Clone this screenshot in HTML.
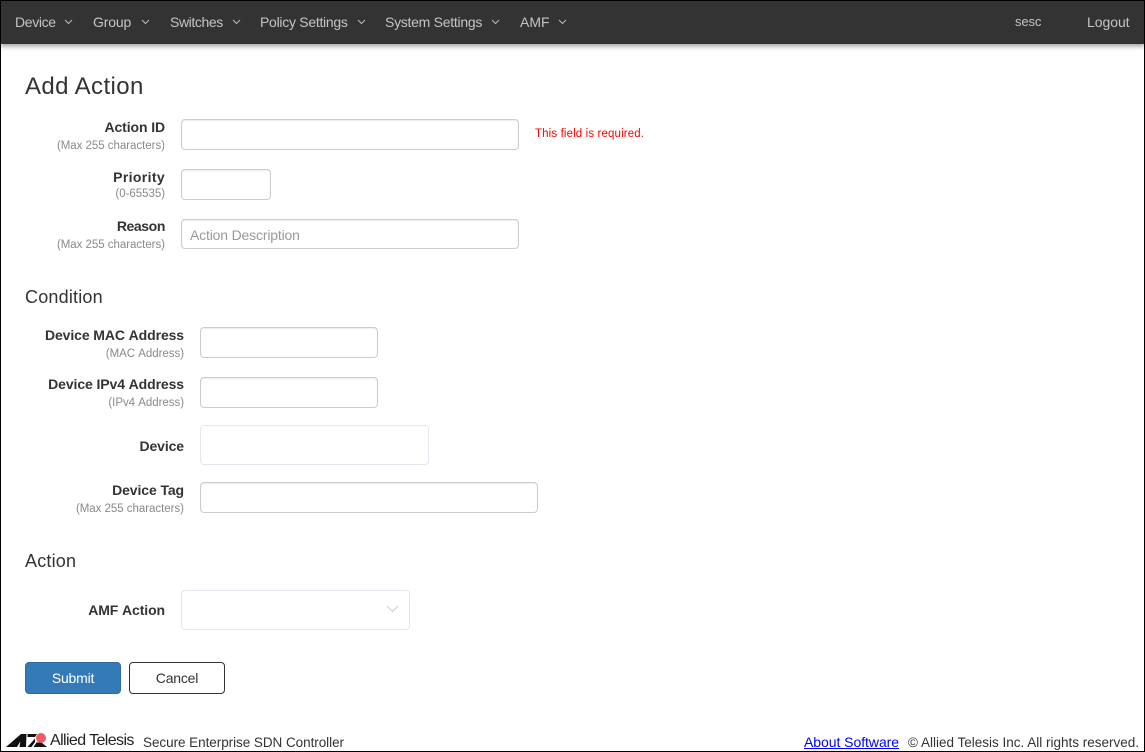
<!DOCTYPE html>
<html><head><meta charset="utf-8"><title>Add Action</title>
<style>
html,body{margin:0;padding:0;background:#fff}
#p{position:relative;width:1145px;height:752px;overflow:hidden;background:#fff;font-family:"Liberation Sans",sans-serif;color:#333}
#f{position:absolute;left:0;top:0;width:1145px;height:752px;box-sizing:border-box;border:1px solid #000;z-index:9;pointer-events:none}
#n{position:absolute;left:0;top:0;width:1145px;height:44px;background:#333;box-shadow:0 2px 5px rgba(0,0,0,.4)}
.t{position:absolute;white-space:nowrap;line-height:18px}
.nv{font-size:14px;color:#c4c4c4;top:13px}
.car{position:absolute;top:19px;width:9px;height:6px}
.l{font-size:14px;font-weight:bold;color:#333;text-align:right;right:0;letter-spacing:-.1px}
.s{font-size:11.5px;color:#8a8a8a;letter-spacing:-.03px}
.i{position:absolute;box-sizing:border-box;background:#fff;border:1px solid #ccc;border-radius:4px;box-shadow:inset 0 1px 1px rgba(0,0,0,.075)}
.c{position:absolute;box-sizing:border-box;background:#fff;border:1px solid #e4e6ef;border-radius:4px}
.r{position:absolute;text-align:right}
.h{font-size:18px;color:#333;letter-spacing:.2px}
.b{position:absolute;box-sizing:border-box;top:662px;width:96px;height:32px;border-radius:4px;text-align:center;font-size:14px;line-height:30px;letter-spacing:-.2px}
</style></head><body><div id="p">
<div id="n">
<span class="t nv" style="left:15px;letter-spacing:-.35px">Device</span>
<span class="t nv" style="left:93px;letter-spacing:-.15px">Group</span>
<span class="t nv" style="left:170px;letter-spacing:-.4px">Switches</span>
<span class="t nv" style="left:260px;letter-spacing:-.28px">Policy Settings</span>
<span class="t nv" style="left:385px;letter-spacing:-.27px">System Settings</span>
<span class="t nv" style="left:520px">AMF</span>
<span class="t nv" style="left:1015px;font-size:13px;letter-spacing:-.1px">sesc</span>
<span class="t nv" style="left:1087px;letter-spacing:-.05px">Logout</span>
<svg class="car" style="left:64px" viewBox="0 0 9 6"><path d="M1 1l3.500 3.500L8 1" fill="none" stroke="#bbb"/></svg>
<svg class="car" style="left:141px" viewBox="0 0 9 6"><path d="M1 1l3.500 3.500L8 1" fill="none" stroke="#bbb"/></svg>
<svg class="car" style="left:232px" viewBox="0 0 9 6"><path d="M1 1l3.500 3.500L8 1" fill="none" stroke="#bbb"/></svg>
<svg class="car" style="left:357px" viewBox="0 0 9 6"><path d="M1 1l3.500 3.500L8 1" fill="none" stroke="#bbb"/></svg>
<svg class="car" style="left:491px" viewBox="0 0 9 6"><path d="M1 1l3.500 3.500L8 1" fill="none" stroke="#bbb"/></svg>
<svg class="car" style="left:558px" viewBox="0 0 9 6"><path d="M1 1l3.500 3.500L8 1" fill="none" stroke="#bbb"/></svg>
</div>

<div class="t" style="left:25px;top:72px;font-size:24px;line-height:30px;color:#333;letter-spacing:.4px">Add Action</div>

<div class="r" style="right:980px;top:118px"><div class="t l" style="top:0">Action ID</div><div class="t s" style="right:0;top:19px">(Max&nbsp;255&nbsp;characters)</div></div>
<div class="i" style="left:181px;top:119px;width:338px;height:31px"></div>
<div class="t" style="left:535px;top:126px;font-size:11.500px;color:#f00;letter-spacing:.13px;line-height:16px">This field is required.</div>

<div class="r" style="right:980px;top:168px"><div class="t l" style="top:0;letter-spacing:.35px">Priority</div><div class="t s" style="right:0;top:17px">(0-65535)</div></div>
<div class="i" style="left:181px;top:169px;width:90px;height:31px"></div>

<div class="r" style="right:980px;top:217px"><div class="t l" style="top:0;letter-spacing:-.4px">Reason</div><div class="t s" style="right:0;top:19px">(Max&nbsp;255&nbsp;characters)</div></div>
<div class="i" style="left:181px;top:219px;width:338px;height:30px"></div>
<div class="t" style="left:190px;top:226px;font-size:14px;color:#999;letter-spacing:-.17px">Action Description</div>

<div class="t h" style="left:25px;top:288px">Condition</div>

<div class="r" style="right:961px;top:326px"><div class="t l" style="top:0">Device&nbsp;MAC&nbsp;Address</div><div class="t s" style="right:0;top:19px">(MAC&nbsp;Address)</div></div>
<div class="i" style="left:200px;top:327px;width:178px;height:31px"></div>

<div class="r" style="right:961px;top:375px"><div class="t l" style="top:0">Device&nbsp;IPv4&nbsp;Address</div><div class="t s" style="right:0;top:19px">(IPv4&nbsp;Address)</div></div>
<div class="i" style="left:200px;top:377px;width:178px;height:31px"></div>

<div class="r" style="right:961px;top:437px"><div class="t l" style="top:0">Device</div></div>
<div class="c" style="left:200px;top:425px;width:229px;height:40px"></div>

<div class="r" style="right:961px;top:481px"><div class="t l" style="top:0">Device&nbsp;Tag</div><div class="t s" style="right:0;top:19px">(Max&nbsp;255&nbsp;characters)</div></div>
<div class="i" style="left:200px;top:482px;width:338px;height:31px"></div>

<div class="t h" style="left:25px;top:552px">Action</div>

<div class="r" style="right:980px;top:601px"><div class="t l" style="top:0">AMF&nbsp;Action</div></div>
<div class="c" style="left:181px;top:590px;width:229px;height:40px"></div>
<svg style="position:absolute;left:386px;top:605px" width="13" height="8" viewBox="0 0 13 8"><path d="M1 1l5.500 5.500L12 1" fill="none" stroke="#c8ccd4"/></svg>

<div class="b" style="left:25px;background:#337ab7;border:1px solid #2e6da4;color:#fff">Submit</div>
<div class="b" style="left:129px;background:#fff;border:1px solid #333;color:#333">Cancel</div>

<svg style="position:absolute;left:6px;top:733px" width="41" height="14" viewBox="0 0 41 14">
<path d="M0 14L15 1h5.500L20 14h-6.500l.8-5.500L11 14z" fill="#111"/>
<path d="M21.500 14L29 5.500V9l-3.500 5z" fill="#111"/>
<path d="M21.500 1H31l-2 3h-7.500z" fill="#111"/>
<path d="M27.500 14l3-4.500h5L41 14z" fill="#111"/>
<circle cx="35" cy="5" r="5" fill="#ee5a66"/>
</svg>
<div class="t" style="left:50px;top:732px;font-size:16px;letter-spacing:-.6px;color:#222">Allied Telesis</div>
<div class="t" style="left:143px;top:734px;font-size:13.500px;color:#333;letter-spacing:-.05px">Secure Enterprise SDN Controller</div>
<div class="t" style="left:804px;top:733px;font-size:14px;color:#00f;text-decoration:underline;letter-spacing:-.05px">About Software</div>
<div class="t" style="left:908px;top:733.500px;font-size:13.500px;color:#333">© Allied Telesis Inc. All rights reserved.</div>
<div id="f"></div>
</div></body></html>
